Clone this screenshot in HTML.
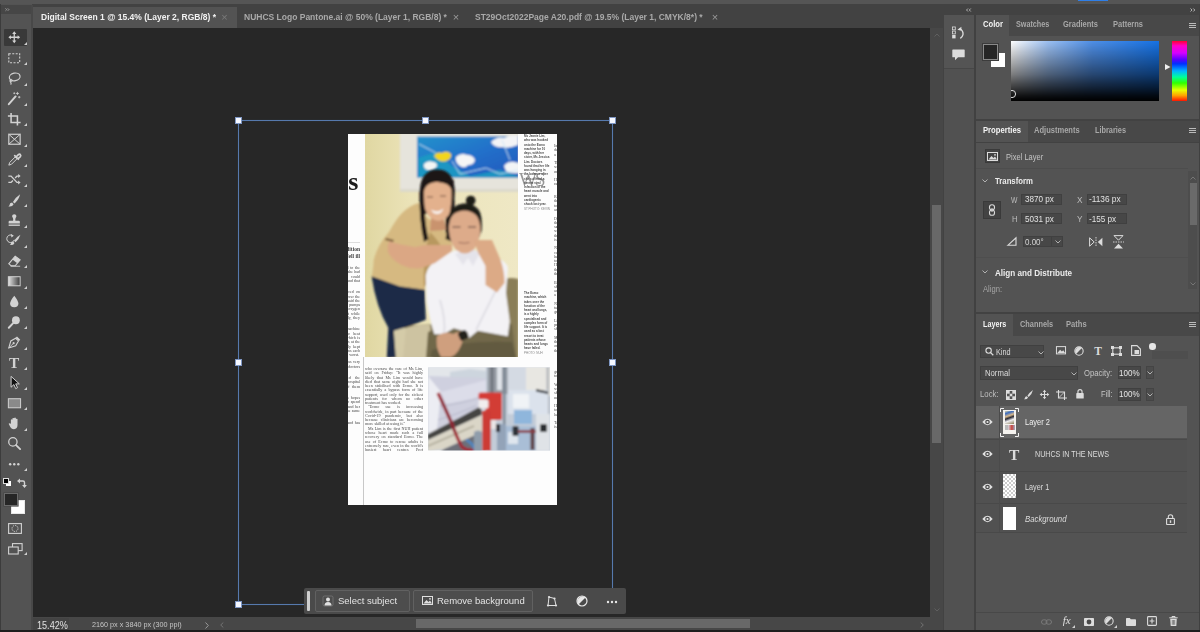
<!DOCTYPE html>
<html lang="en">
<head>
<meta charset="utf-8">
<title>Photoshop</title>
<style>
*{box-sizing:border-box;margin:0;padding:0}
html,body{width:1200px;height:632px;overflow:hidden;background:#535353}
body{font-family:"Liberation Sans",sans-serif;color:#dcdcdc;font-size:8.5px;position:relative}
.a{position:absolute}
.t{position:absolute;white-space:nowrap;line-height:1;filter:blur(.35px)}
.b{font-weight:bold;color:#f2f2f2}
svg{position:absolute;overflow:visible}
/* ---------- frame ---------- */
#topstrip{left:0;top:0;width:1200px;height:4px;background:#555}
#tabbar{left:32px;top:4px;width:912px;height:24px;background:#424242}
#tabactive{left:33px;top:7px;width:204px;height:21px;background:#535353}
#tools{left:0;top:4px;width:32px;height:628px;background:#535353;border-left:1px solid #3c3c3c}
#toolshead{left:1px;top:5px;width:29.500px;height:8.500px;background:#464646}
#toolsedge{left:30.500px;top:5px;width:2.500px;height:625px;background:#484848}
#canvas{left:33px;top:28px;width:897px;height:589px;background:#272727}
#vscroll{left:930px;top:28px;width:13px;height:589px;background:#474747}
#vthumb{left:932px;top:205px;width:9px;height:238px;background:#686868}
#status{left:33px;top:617px;width:910px;height:13px;background:#474747}
#hthumb{left:416px;top:619px;width:334px;height:9px;background:#686868}
#bottomline{left:0;top:630px;width:1200px;height:2px;background:#1e1e1e}
#rightbg{left:943px;top:4px;width:257px;height:626px;background:#424242}
#iconcol{left:944px;top:15px;width:30px;height:615px;background:#515151}
#iconcoltop{left:944px;top:15px;width:30px;height:54px;background:#545454}
.panel{background:#535353}
.phead{background:#484848}
.ptab{background:#535353}
</style>
</head>
<body>
<div class="a" id="topstrip"></div>
<div class="a" id="rightbg"></div>
<div class="a" id="tabbar"></div>
<div class="a" id="tabactive"></div>
<div class="a" id="tools"></div>
<div class="a" id="toolshead"></div>
<div class="a" id="toolsedge"></div>
<div class="a" id="canvas"></div>
<div class="a" id="vscroll"></div>
<div class="a" id="vthumb"></div>
<div class="a" id="status"></div>
<div class="a" id="hthumb"></div>
<div class="a" id="iconcol"></div>
<div class="a" id="iconcoltop"></div>

<!-- TABS TEXT -->
<div class="t b" id="tab1" style="left:41px;top:13px;font-size:8.5px">Digital Screen 1 @ 15.4% (Layer 2, RGB/8) *</div>
<div class="t" id="tab1x" style="left:221.300px;top:11.500px;font-size:11px;color:#7a7a7a">×</div>
<div class="t b" id="tab2" style="left:244px;top:13px;font-size:8.5px;color:#a9a9a9">NUHCS Logo Pantone.ai @ 50% (Layer 1, RGB/8) *</div>
<div class="t" id="tab2x" style="left:452.800px;top:11.500px;font-size:11px;color:#9a9a9a">×</div>
<div class="t b" id="tab3" style="left:475px;top:13px;font-size:8.5px;color:#a9a9a9">ST29Oct2022Page A20.pdf @ 19.5% (Layer 1, CMYK/8*) *</div>
<div class="t" id="tab3x" style="left:711.800px;top:11.500px;font-size:11px;color:#9a9a9a">×</div>

<!-- CANVAS CONTENT -->
<div class="a" id="doc" style="left:348px;top:134px;width:209px;height:371px;background:#fdfdfd"></div>
<svg id="photo" width="1200" height="632" viewBox="0 0 1200 632" style="left:0;top:0">
<defs>
<filter id="bl1" x="-20%" y="-20%" width="140%" height="140%"><feGaussianBlur stdDeviation="0.8"/></filter>
<filter id="bl2" x="-20%" y="-20%" width="140%" height="140%"><feGaussianBlur stdDeviation="1.6"/></filter>
<linearGradient id="wall" x1="0" y1="0" x2="1" y2="0"><stop offset="0" stop-color="#e0d7a2"/><stop offset=".3" stop-color="#ebe3b8"/><stop offset="1" stop-color="#efe8c5"/></linearGradient>
<linearGradient id="paint" x1="0" y1="0" x2="1" y2="1"><stop offset="0" stop-color="#2292cc"/><stop offset=".5" stop-color="#2370ca"/><stop offset="1" stop-color="#2058bc"/></linearGradient>
<clipPath id="cp1"><rect x="365" y="134" width="153" height="223"/></clipPath>
<clipPath id="cp2"><rect x="428" y="367.500" width="122" height="83"/></clipPath>
</defs>
<!-- PHOTO 1 -->
<g clip-path="url(#cp1)">
<rect x="365" y="134" width="153" height="223" fill="url(#wall)"/>
<g filter="url(#bl1)">
<rect x="400" y="133" width="120" height="59" fill="#e6e4dc"/>
<rect x="400" y="189" width="120" height="3" fill="#dcd9cc"/>
<rect x="417" y="136.500" width="102" height="41" fill="url(#paint)"/>
<path d="M418 158 L436 152 L452 166 L470 176 L500 170 L518 176 L518 177.500 L418 177.500Z" fill="#1a9cc2" opacity=".85"/>
<path d="M424 164 q4 -4 9 -2 q4 0 4 4 q-3 5 -9 4 q-5 -1 -4 -6z" fill="#f4f6f4"/>
<path d="M456 157 q5 -5 11 -2 q6 0 8 5 q-1 5 -7 5 q-3 4 -8 1 q-5 -3 -4 -9z" fill="#f6f6f6"/>
<path d="M491 142 q6 -6 13 -4 q8 -4 14 -2 v9 q-10 4 -16 2 q-8 1 -11 -5z" fill="#f3f4f6"/>
<path d="M504 166 q4 -5 10 -4 l5 1 v10 q-9 1 -13 -2z" fill="#f3f4f6"/>
<path d="M434 156 q3 -5 8 -3 q5 -3 9 1 q1 5 -5 7 q-7 2 -12 -5z" fill="#f3d51c"/>
<path d="M419 144 L436 153 M452 161 L460 174 L486 168 L500 174 L518 170 M502 140 L510 160" stroke="#c9e6f4" stroke-width=".9" fill="none"/>
</g>
<g filter="url(#bl1)">
<!-- chair -->
<path d="M504.500 279 q6 -2 14 0 v80 h-127 v-28 q10 -8 20 -6 l60 -2 l32 -8z" fill="#8a7e58"/>
<path d="M392 331 q8 -6 16 -2 l-3 30 h-13z" fill="#d4cba8"/><path d="M406 328 q12 -5 24 -3 l3 34 h-30z" fill="#cdc3a1"/>
<path d="M428 332 q20 -8 40 -6 l44 -2 l4 34 h-90z" fill="#71684a"/>
<path d="M432 350 q30 -10 80 -8 l4 16 h-86z" fill="#625a40"/>
<!-- woman1 hair back -->
<path d="M419.800 192 q.5 -21.500 16.600 -22.500 q17.500 -.5 18.400 21.500 l-.8 15 l-2 36 l-7 -2 l1 -30 l-22 4 l2 26 q2 8 3.500 6 l-3 .5 q-5 -12 -6 -28 q-1 -14 -.7 -26.500z" fill="#1d1815"/>
<!-- beige shirt -->
<path d="M371.600 276.500 q2 -10 2 -16 q4 -16 15 -28 q8 -14 13 -19 q8 -8 17 -10.500 l8 14 l20 16 l6 12 l-20 18 l-8 13 l0.200 14 q-28 -2 -53.400 -13.500z" fill="#d6b981"/>
<path d="M386 238 l8 2 l-1 2 l-8 -2z" fill="#7a5c3a"/>
<path d="M430 232 q10 10 14 20 l-12 22 l-8 14 q-2 -30 6 -56z" fill="#b8985f"/>
<!-- jeans -->
<path d="M371.600 276.300 l28 10 l25.200 3.400 l1 30 q-14 6 -32 11 l2 27 h-9 l1.500 -30 q-12 -20 -16.700 -51.400z" fill="#1a2947"/>
<!-- woman1 face -->
<path d="M431 218 h13 l2 12 l-16 1z" fill="#c9936e"/><path d="M423.700 200 q-.5 -13 4 -16 q5 -2.500 10 -2 q6 .5 10 2.500 q5 3.500 5.300 15.500 q0 12 -7 18 q-7.500 6 -15 0 q-7 -6 -7.300 -18z" fill="#e3b18d"/>
<path d="M431 209.500 q6 4 12.500 -1 q-2 5.500 -6.500 5.500 q-4 0 -6 -4.500z" fill="#f8f1ec"/>
<path d="M427 197 h6 M440 196 h6" stroke="#5a3c30" stroke-width=".8"/>
<!-- hair strand front -->
<path d="M419.500 192 q-.5 28 4.500 50 l4.500 -3 q-4.500 -18 -4.500 -50z" fill="#1d1815"/><path d="M423.500 190 q4 -8 14 -8.500 q10 0 15.500 9 l1 -10 l-16 -9 l-15 8z" fill="#1d1815"/>
<!-- white shirt -->
<path d="M454 250.500 l-19.700 11.500 q-7 5 -8.600 13.400 l1 26.600 q3 18 7.600 32.300 l9.500 0 l10 -6 l14 4 l1 6 l9 -7.500 l30 5.500 l2 -15 l-3.800 -28.500 l2 -25 q-2 -7 -11.300 -9.500 l-19 -7.600z" fill="#f3f2f5"/>
<path d="M440 300 q6 20 4 34 M496 290 q-10 20 -20 40" stroke="#d9d8df" stroke-width="1.500" fill="none"/>
<path d="M455 254 l8 11 l5 -7 l5 8 l7 -13 l-10 -5z" fill="#e4e3ea"/>
<path d="M451.500 190 q3.500 8 3 17 l-4 34 l-5 -2 l3.500 -22 q3 -14 2.500 -27z" fill="#1d1815"/>
<!-- woman2 hair -->
<circle cx="470.700" cy="200.500" r="4.800" fill="#1f1b19"/>
<path d="M448 228 q-1 -12 4 -19 q5 -5.500 14 -5.800 q10 .8 14 9 q2.500 7 1.700 18 l-3 8 l-28 0z" fill="#1f1b19"/>
<!-- woman2 face -->
<path d="M448.800 229 q0 -10 5 -15 q5 -3.500 11 -3.500 q7 .5 11.500 5 q4 5 4 14.500 q-.5 12 -7 20 q-8.500 7 -17 0 q-7 -8 -7.500 -21z" fill="#ddab8a"/>
<path d="M458.500 242.500 q6 1.500 11 0" stroke="#9a6a58" stroke-width="1" fill="none"/>
<path d="M452.500 227 h8 M468 227 h8" stroke="#4a342c" stroke-width=".9"/>
<!-- forearm in front (left) -->
<path d="M389 241.500 l12 3 l14 2.500 l10 -2 h27 v6 l-17 12 l-13.500 5 q-10 2 -20 -3 q-10 -5 -13.500 -13 q-1 -6 1 -10.500z" fill="#dba784"/>
<!-- arm over right shoulder -->
<path d="M474 240 l18 0 l8.700 20.200 q4 12 3.800 22.800 l-7.500 9.500 l-11.500 -7.500 l0 -19 l-7.500 -13.400z" fill="#dcaa86"/>
<!-- hands -->
<path d="M437 336 q8 -6 16 -2 l7 -3 l3 9 q-4 14 -12 17 h-10 q-6 -10 -4 -21z" fill="#cf9f7e"/>
<rect x="459" y="331" width="9" height="9" rx="2" fill="#23201f" transform="rotate(-25 463 336)"/>
</g>
</g>
<!-- PHOTO 2 -->
<g clip-path="url(#cp2)">
<rect x="428" y="367" width="122" height="83.500" fill="#ccd2db"/>
<g filter="url(#bl1)">
<rect x="428" y="366" width="60" height="12" fill="#e3e6ea"/>
<path d="M450 372 l20 -3 l16 2 v8 h-36z" fill="#cdd5de"/>
<path d="M428 376 L486 378 L487 408 L459 418 L428 434Z" fill="#cfd0df"/>
<path d="M428 376 L441 392 L437 430 L428 434Z" fill="#ecedf3"/>
<path d="M441 392 L486 380 L487 396 L446 404Z" fill="#dcdde9"/>
<path d="M440 406 q22 -2 44 -10 M438 420 q20 -6 38 -14" stroke="#b9bacb" stroke-width="1.300" fill="none"/>
<path d="M428 434 L459 418 L481 406 L481.800 415 L428 440Z" fill="#454442"/>
<path d="M428 440 L481.800 415 L481.800 432 L444 449 L428 451Z" fill="#dad6c7"/>
<path d="M428 446 L474 426" stroke="#aeaa98" stroke-width="1.600"/>
<path d="M444 449 L482 432 L482 452 L440 452Z" fill="#6d7078"/>
<!-- right equipment -->
<rect x="486" y="366" width="66" height="86" fill="#c3ccd8"/>
<rect x="487.500" y="366" width="20" height="28" fill="#969ca4"/>
<rect x="490.500" y="366" width="3" height="40" fill="#6f757d"/>
<rect x="497" y="366" width="5" height="24" fill="#dfe3e8"/>
<rect x="503" y="366" width="2.500" height="60" fill="#7c8794"/>
<rect x="508" y="366" width="18" height="24" fill="#d4dae3"/>
<rect x="526" y="366" width="26" height="30" fill="#e8e7e2"/>
<rect x="546.500" y="366" width="2.500" height="84" fill="#b4b7bb"/>
<rect x="508" y="390" width="40" height="24" fill="#dbe2ec"/>
<rect x="513" y="394" width="16" height="14" fill="#f0f3f6"/>
<path d="M536 389 l12 2.500 v2.500 l-12 -2.500z" fill="#33353a"/>
<rect x="514" y="410" width="18" height="14" fill="#8fb6dc"/>
<rect x="506" y="426" width="30" height="25" fill="#a9bed6"/>
<rect x="508" y="432" width="10" height="12" fill="#dfe6ee"/>
<rect x="512.500" y="426" width="6" height="10" rx="1.500" fill="#2e3238"/>
<rect x="530.500" y="428" width="4" height="22" fill="#5d3f44"/>
<rect x="536" y="414" width="14" height="37" fill="#dfe3e7"/>
<rect x="540" y="424" width="7" height="8" rx="1.500" fill="#2a2d31"/>
<path d="M518 431.500 h18" stroke="#8a3a42" stroke-width="2.600"/>
<rect x="497" y="424" width="9" height="27" fill="#93a3b8"/>
<!-- red machine -->
<rect x="478.500" y="392.500" width="23.500" height="7" rx="2" fill="#d53a34"/>
<rect x="485.500" y="398" width="16.500" height="22" rx="2" fill="#d23c36"/>
<rect x="478.500" y="399.500" width="10" height="9" rx="2" fill="#f1eeef"/>
<rect x="482.300" y="411" width="8.500" height="40" fill="#cc3b35"/>
<rect x="491" y="420" width="5" height="9" fill="#e9e5e6"/>
<rect x="496" y="424" width="4" height="8" fill="#2a2c30"/>
<!-- tubes -->
<path d="M438 393 Q446 410 452 424 Q457 438 462 447 Q467 451 475 450" stroke="#a32836" stroke-width="3.300" fill="none"/>
<path d="M441 399 Q449 416 455 432" stroke="#7a2030" stroke-width="1.400" fill="none"/>
<path d="M466 440 q6 2 9 10" stroke="#4d86c2" stroke-width="2.600" fill="none"/>
<path d="M474 432 q4 -3 8 0 v20 h-8z" fill="#8f9dab"/>
</g>
</g>
</svg>
<style>
.np{position:absolute;overflow:hidden;font-family:"Liberation Serif",serif;font-size:3.6px;line-height:4.27px;color:#2a2a2a;text-align:justify;filter:blur(.3px)}
.np p{text-indent:3px}
.cap{font-family:"Liberation Sans",sans-serif;font-weight:bold;font-size:3px;color:#484848;text-align:left}
</style>
<div class="t" id="bigS" style="left:348.300px;top:169px;font-family:'Liberation Serif',serif;font-weight:bold;font-size:26px;color:#1c1c1c;filter:blur(.4px)">s</div>
<div class="a" style="left:348px;top:242px;width:12px;height:1px;background:#ddd"></div>
<div class="np" style="left:348px;top:246px;width:12px;height:14px;font-weight:bold;font-size:5.5px;line-height:6.5px;color:#444"><div style="width:40px;margin-left:-28px;text-align:right">heart condition<br>after she fell ill</div></div>
<div class="np" id="lcol" style="left:348px;top:266px;width:12px;height:160px;font-size:4px;color:#444"><div style="width:60px;margin-left:-48px;text-align:justify">
When Ms Lim was admitted to the National University Hospital she had been unwell for days and could barely breathe and doctors found that her heart was failing badly.
<p style="margin-top:3px">Within hours she was placed on Ecmo, a machine that takes over the work of the heart and lungs, said the cardiac team on Friday. It pumps blood out of the body, adds oxygen and returns it to the patient while organs rest and recover slowly, they said.</p>
<p style="margin-top:3px">She spent ten days on the machine before her heart began to beat strongly on its own again, which is rare, the doctors told reporters at the heart centre here. Her family kept vigil at the bedside, taking turns each night, and said they feared the worst.</p>
<p style="margin-top:3px">Her sister said the family was very grateful to the nurses and doctors who cared.</p>
<p style="margin-top:3px">About 100 patients need the treatment here each year, the hospital said, and more than half of them survive.</p>
<p style="margin-top:3px">The mother of two said she hopes to return to work soon and to spend more time with her children and her parents, who live nearby in the same estate.</p>
<p style="margin-top:3px">She now walks every day and has been told her heart is normal.</p>
</div></div>
<div class="a" style="left:363px;top:357px;width:1px;height:148px;background:#c8c8c8"></div>
<div class="np" id="mcol" style="left:365px;top:367px;width:58px;height:84px;color:#484848;font-size:4.1px">
who oversaw the care of Ms Lim, said on Friday: "It was highly likely that Ms Lim would have died that same night had she not been stabilised with Ecmo. It is essentially a bypass form of life support, used only for the sickest patients for whom no other treatment has worked.
<p>"Ecmo use is increasing worldwide, in part because of the Covid-19 pandemic, but also because clinicians are becoming more skilled at using it."</p>
<p>Ms Lim is the first NUH patient whose heart made such a full recovery on standard Ecmo. The use of Ecmo to rescue adults is extremely rare, even in the world's busiest heart centres, Prof MacLaren said.</p>
</div>
<div class="np cap" id="cap1" style="left:524px;top:134px;width:26px;height:77px">Ms Jeanie Lim, who was hooked onto the Ecmo machine for 10 days, with her sister, Ms Jessica Lim. Doctors found that her life was hanging in the balance after she suffered a severe viral infection of the heart muscle and went into cardiogenic shock last year. <span style="color:#888;font-weight:normal">ST PHOTO: KEVIN LIM</span></div>
<div class="t" id="vvs" style="left:519px;top:170px;font-family:'Liberation Serif',serif;font-size:19px;letter-spacing:-2px;color:#555;opacity:.6;filter:blur(.4px)">WS</div>
<div class="np cap" id="cap2" style="left:524px;top:291px;width:26px;height:66px">The Ecmo machine, which takes over the function of the heart and lungs, is a highly specialised and complex form of life support. It is used as a last resort to treat patients whose hearts and lungs have failed. <span style="color:#888;font-weight:normal">PHOTO: NUH</span></div>
<div class="np" id="rcol" style="left:554.300px;top:144px;width:2.700px;height:220px;color:#333"><div style="width:60px">
In a first for the hospital, the team<br>decided to try<br>a newer drug.<br><br>The patient<br>was then<br>moved.<br><br>Her heart<br>rate rose.<br><br><br>Recovery of<br>the muscle<br>took weeks<br>and months.<br><br>Doctors at<br>the centre<br>said they<br>were glad<br>that she<br>is well.<br><br>Nurses who<br>cared for<br>her came<br>to visit.<br>Her family<br>thanked<br>them all.<br><br>Back home<br>she rests<br>and walks<br>a little.<br><br>Nothing is<br>taken for<br>granted.<br><br>Life is<br>precious<br>she said.<br><br>More on<br>the story<br>online at<br>the site.
</div></div>
<div class="np" id="rcol2" style="left:554.300px;top:370px;width:2.700px;height:60px;color:#333"><div style="width:60px">
grateful<br>to them.<br><br>When she<br>woke up<br>she did<br>not know.<br><br>Her sister<br>told her<br>later on.<br><br>Today she<br>is back.
</div></div>
<style>
.tl{position:absolute;background:#5679ad;box-shadow:0 0 1px rgba(70,100,150,.5)}
.hd{position:absolute;width:7.500px;height:7.500px;background:#f6f8ff;border:1px solid #7f97c4;margin:-.25px 0 0 -.25px}
</style>
<div class="tl" style="left:238px;top:120px;width:374px;height:1px"></div>
<div class="tl" style="left:238px;top:604px;width:374px;height:1px"></div>
<div class="tl" style="left:238px;top:120px;width:1px;height:485px"></div>
<div class="tl" style="left:612px;top:120px;width:1px;height:485px"></div>
<div class="hd" style="left:235px;top:117px"></div>
<div class="hd" style="left:422px;top:117px"></div>
<div class="hd" style="left:609px;top:117px"></div>
<div class="hd" style="left:235px;top:359px"></div>
<div class="hd" style="left:609px;top:359px"></div>
<div class="hd" style="left:235px;top:601px"></div>
<!-- contextual task bar -->
<div class="a" id="ctx" style="left:304px;top:588px;width:322px;height:26px;background:#4a4a4a;border-radius:2px"></div>
<div class="a" style="left:307px;top:591px;width:3px;height:20px;background:#cfcfcf;border-radius:1px"></div>
<div class="a" style="left:315px;top:590px;width:95px;height:22px;border:1px solid #616161;border-radius:2px;background:#4d4d4d"></div>
<div class="a" style="left:413px;top:590px;width:120px;height:22px;border:1px solid #616161;border-radius:2px;background:#4d4d4d"></div>
<svg width="10" height="10" viewBox="0 0 10 10" style="left:323px;top:596px"><rect x="0" y="0" width="10" height="10" rx="1.500" fill="none" stroke="#777" stroke-width=".8"/><circle cx="5" cy="3.600" r="2" fill="#e0e0e0"/><path d="M1.500 9.500 q0 -3.500 3.500 -3.500 q3.500 0 3.500 3.500z" fill="#e0e0e0"/></svg>
<div class="t" id="selsub" style="left:338px;top:596px;font-size:9.5px;color:#e4e4e4">Select subject</div>
<svg width="11" height="9" viewBox="0 0 11 9" style="left:422px;top:596px"><rect x=".5" y=".5" width="10" height="8" fill="none" stroke="#e0e0e0" stroke-width="1"/><path d="M1.500 7.500 l3 -3.500 l2 2 l1.500 -1.500 l2 3z" fill="#e0e0e0"/><circle cx="8" cy="2.800" r=".9" fill="#e0e0e0"/></svg>
<div class="t" id="rembg" style="left:437px;top:596px;font-size:9.5px;color:#e4e4e4">Remove background</div>
<svg width="12" height="12" viewBox="0 0 12 12" style="left:546px;top:595px"><path d="M2 10.500 L3 2 L8.500 3.500 L10 10.500 Z" fill="none" stroke="#e0e0e0" stroke-width="1"/><circle cx="3" cy="2" r="1.100" fill="#e0e0e0"/><circle cx="8.500" cy="3.500" r="1.100" fill="#e0e0e0"/><circle cx="10" cy="10.500" r="1.100" fill="#e0e0e0"/><circle cx="2" cy="10.500" r="1.100" fill="#e0e0e0"/></svg>
<svg width="12" height="12" viewBox="0 0 12 12" style="left:576px;top:595px"><circle cx="6" cy="6" r="5" fill="none" stroke="#e8e8e8" stroke-width="1.200"/><path d="M2.500 9.500 A5 5 0 0 1 9.500 2.500 Z" fill="#e8e8e8"/></svg>
<svg width="12" height="4" viewBox="0 0 12 4" style="left:606px;top:600px"><circle cx="2" cy="2" r="1.200" fill="#e8e8e8"/><circle cx="6" cy="2" r="1.200" fill="#e8e8e8"/><circle cx="10" cy="2" r="1.200" fill="#e8e8e8"/></svg>

<!--CANVAS_END-->

<!-- TOOLBAR -->
<!--TOOLS_BEGIN-->
<div class="a" style="left:4px;top:29.300px;width:22.700px;height:17px;background:#393939;border-radius:1px"></div>
<svg width="5" height="3.200" viewBox="0 0 6 4" style="left:5.300px;top:8px"><path d="M.5 .5 L2 2 L.5 3.500 M3.300 .5 L4.800 2 L3.300 3.500" fill="none" stroke="#bdbdbd" stroke-width=".9"/></svg>
<svg width="14.500" height="14.500" viewBox="0 0 16 16" style="left:6.800px;top:30.3px;filter:blur(.35px)"><path d="M8 1.500 L10.300 4.300 H8.700 V7.300 H11.700 V5.700 L14.500 8 L11.700 10.300 V8.700 H8.700 V11.700 H10.300 L8 14.500 L5.700 11.700 H7.300 V8.700 H4.300 V10.300 L1.500 8 L4.300 5.700 V7.300 H7.300 V4.300 H5.700Z" fill="#d2d2d2"/></svg>
<svg width="3" height="3" viewBox="0 0 3 3" style="left:23.500px;top:42.0px"><path d="M3 0 V3 H0Z" fill="#cfcfcf"/></svg>
<svg width="14.500" height="14.500" viewBox="0 0 16 16" style="left:6.800px;top:50.6px;filter:blur(.35px)"><rect x="2" y="3" width="12" height="10" fill="none" stroke="#d2d2d2" stroke-width="1.200" stroke-dasharray="2.200 1.600"/></svg>
<svg width="3" height="3" viewBox="0 0 3 3" style="left:23.500px;top:62.3px"><path d="M3 0 V3 H0Z" fill="#cfcfcf"/></svg>
<svg width="14.500" height="14.500" viewBox="0 0 16 16" style="left:6.800px;top:70.9px;filter:blur(.35px)"><ellipse cx="8.500" cy="6.500" rx="6" ry="4.200" fill="none" stroke="#d2d2d2" stroke-width="1.300" transform="rotate(-12 8.500 6.500)"/><path d="M4.500 9.800 q-1.800 1.200 -.6 2.600 q1.200 1.200 .2 2.600" fill="none" stroke="#d2d2d2" stroke-width="1.200"/><circle cx="4.600" cy="10.500" r="1.300" fill="none" stroke="#d2d2d2" stroke-width="1"/></svg>
<svg width="3" height="3" viewBox="0 0 3 3" style="left:23.500px;top:82.6px"><path d="M3 0 V3 H0Z" fill="#cfcfcf"/></svg>
<svg width="14.500" height="14.500" viewBox="0 0 16 16" style="left:6.800px;top:91.2px;filter:blur(.35px)"><path d="M2 14.500 L9.500 6" stroke="#d2d2d2" stroke-width="2.200" stroke-linecap="round"/><path d="M11.500 1 v3.400 M9.800 2.700 h3.400 M13.500 5.500 v2.600 M12.200 6.800 h2.600 M8 1.500 v2 M7 2.500 h2" stroke="#d2d2d2" stroke-width=".9"/></svg>
<svg width="3" height="3" viewBox="0 0 3 3" style="left:23.500px;top:102.9px"><path d="M3 0 V3 H0Z" fill="#cfcfcf"/></svg>
<svg width="14.500" height="14.500" viewBox="0 0 16 16" style="left:6.800px;top:111.5px;filter:blur(.35px)"><path d="M4.500 1 V11.500 H15" fill="none" stroke="#d2d2d2" stroke-width="1.700"/><path d="M1 4.500 H11.500 V15" fill="none" stroke="#d2d2d2" stroke-width="1.700"/></svg>
<svg width="3" height="3" viewBox="0 0 3 3" style="left:23.500px;top:123.2px"><path d="M3 0 V3 H0Z" fill="#cfcfcf"/></svg>
<svg width="14.500" height="14.500" viewBox="0 0 16 16" style="left:6.800px;top:131.8px;filter:blur(.35px)"><rect x="2" y="2.500" width="12.500" height="11" fill="none" stroke="#d2d2d2" stroke-width="1.300"/><path d="M2 2.500 L14.500 13.500 M14.500 2.500 L2 13.500" stroke="#d2d2d2" stroke-width="1.100"/></svg>
<svg width="3" height="3" viewBox="0 0 3 3" style="left:23.500px;top:143.5px"><path d="M3 0 V3 H0Z" fill="#cfcfcf"/></svg>
<svg width="14.500" height="14.500" viewBox="0 0 16 16" style="left:6.800px;top:152.1px;filter:blur(.35px)"><path d="M2 14.500 L3 11.500 L9 5.500 L11 7.500 L5 13.500 Z" fill="none" stroke="#d2d2d2" stroke-width="1.100"/><path d="M8.500 4 L12.500 8 M10 5.500 L12.500 3 q1.500 -1.200 2.300 0 q.9 1 -.3 2.300 L12 7.500" stroke="#d2d2d2" stroke-width="1.900" fill="none" stroke-linecap="round"/></svg>
<svg width="3" height="3" viewBox="0 0 3 3" style="left:23.500px;top:163.8px"><path d="M3 0 V3 H0Z" fill="#cfcfcf"/></svg>
<svg width="14.500" height="14.500" viewBox="0 0 16 16" style="left:6.800px;top:172.4px;filter:blur(.35px)"><path d="M1.500 4.500 H4.500 L11 11.500 H13 M1.500 11.500 H4.500 L6.500 9.300 M9 6.700 L11 4.500 H13" fill="none" stroke="#d2d2d2" stroke-width="1.500"/><path d="M12.300 2.300 L15 4.500 L12.300 6.700Z M12.300 9.300 L15 11.500 L12.300 13.700Z" fill="#d2d2d2"/></svg>
<svg width="3" height="3" viewBox="0 0 3 3" style="left:23.500px;top:184.1px"><path d="M3 0 V3 H0Z" fill="#cfcfcf"/></svg>
<svg width="14.500" height="14.500" viewBox="0 0 16 16" style="left:6.800px;top:192.7px;filter:blur(.35px)"><path d="M14.500 1.500 q-5 3.500 -8 8.300 l1.800 1.800 q4.800 -4 6.200 -10.100z" fill="#d2d2d2"/><path d="M5.600 10.600 q-2.800 .2 -2.800 2.600 q-.3 1.200 -1.500 1.600 q4.500 1 6 -2.500z" fill="#d2d2d2"/></svg>
<svg width="3" height="3" viewBox="0 0 3 3" style="left:23.500px;top:204.4px"><path d="M3 0 V3 H0Z" fill="#cfcfcf"/></svg>
<svg width="14.500" height="14.500" viewBox="0 0 16 16" style="left:6.800px;top:213.0px;filter:blur(.35px)"><path d="M6 2.200 q2 -1.600 4 0 q1 1.600 -.5 3.300 q-.6 1 -.2 3 h3.700 q1.200 0 1.200 1.200 V11.500 H1.800 V9.700 q0 -1.200 1.200 -1.200 H6.700 q.4 -2 -.2 -3 q-1.500 -1.700 -.5 -3.300z" fill="#d2d2d2"/><rect x="1.800" y="12.700" width="12.400" height="1.500" fill="#d2d2d2"/></svg>
<svg width="3" height="3" viewBox="0 0 3 3" style="left:23.500px;top:224.7px"><path d="M3 0 V3 H0Z" fill="#cfcfcf"/></svg>
<svg width="14.500" height="14.500" viewBox="0 0 16 16" style="left:6.800px;top:233.3px;filter:blur(.35px)"><path d="M14.800 2 q-4.500 2.500 -7 6.500 l1.700 1.700 q3.800 -3.200 5.300 -8.200z" fill="#d2d2d2"/><path d="M6.800 9.400 q-2.400 .1 -2.500 2.200 q-.3 1.200 -1.400 1.500 q4 .9 5.400 -2.200z" fill="#d2d2d2"/><path d="M6.500 3 A4.200 4.200 0 1 0 8 7.500" fill="none" stroke="#d2d2d2" stroke-width="1.100"/><path d="M4.500 1 L7.500 3 L4.800 5Z" fill="#d2d2d2"/></svg>
<svg width="3" height="3" viewBox="0 0 3 3" style="left:23.500px;top:245.0px"><path d="M3 0 V3 H0Z" fill="#cfcfcf"/></svg>
<svg width="14.500" height="14.500" viewBox="0 0 16 16" style="left:6.800px;top:253.6px;filter:blur(.35px)"><path d="M9 2.500 L14.500 6.500 L9 13 H4.500 L2 10.800 Z" fill="none" stroke="#d2d2d2" stroke-width="1.200"/><path d="M9 2.500 L14.500 6.500 L11.300 10.200 L6 6z" fill="#d2d2d2"/><path d="M4 13.500 H14.500" stroke="#d2d2d2" stroke-width="1"/></svg>
<svg width="3" height="3" viewBox="0 0 3 3" style="left:23.500px;top:265.3px"><path d="M3 0 V3 H0Z" fill="#cfcfcf"/></svg>
<svg width="14.500" height="14.500" viewBox="0 0 16 16" style="left:6.800px;top:273.9px;filter:blur(.35px)"><defs><linearGradient id="gtool" x1="0" x2="1"><stop offset="0" stop-color="#e4e4e4"/><stop offset="1" stop-color="#3a3a3a"/></linearGradient></defs><rect x="1.500" y="3" width="13" height="10" fill="url(#gtool)" stroke="#d2d2d2" stroke-width="1.100"/></svg>
<svg width="3" height="3" viewBox="0 0 3 3" style="left:23.500px;top:285.6px"><path d="M3 0 V3 H0Z" fill="#cfcfcf"/></svg>
<svg width="14.500" height="14.500" viewBox="0 0 16 16" style="left:6.800px;top:294.2px;filter:blur(.35px)"><path d="M8 1.800 q4.600 5.600 4.600 8.800 q0 4 -4.600 4 q-4.600 0 -4.600 -4 q0 -3.200 4.600 -8.800z" fill="#d2d2d2"/></svg>
<svg width="3" height="3" viewBox="0 0 3 3" style="left:23.500px;top:305.9px"><path d="M3 0 V3 H0Z" fill="#cfcfcf"/></svg>
<svg width="14.500" height="14.500" viewBox="0 0 16 16" style="left:6.800px;top:314.5px;filter:blur(.35px)"><circle cx="9.800" cy="5.800" r="4.300" fill="#d2d2d2"/><path d="M6.800 9 L2 14" stroke="#d2d2d2" stroke-width="2.200" stroke-linecap="round"/></svg>
<svg width="3" height="3" viewBox="0 0 3 3" style="left:23.500px;top:326.2px"><path d="M3 0 V3 H0Z" fill="#cfcfcf"/></svg>
<svg width="14.500" height="14.500" viewBox="0 0 16 16" style="left:6.800px;top:334.8px;filter:blur(.35px)"><path d="M2 14.300 L4.200 6.600 L9.600 3.600 L12.600 6.600 L9.600 12 Z" fill="none" stroke="#d2d2d2" stroke-width="1.200"/><path d="M2 14.300 L6.800 9.500" stroke="#d2d2d2" stroke-width="1"/><circle cx="7.300" cy="9" r="1.200" fill="#d2d2d2"/><path d="M10.300 2.300 L13.900 5.900" stroke="#d2d2d2" stroke-width="2"/></svg>
<svg width="3" height="3" viewBox="0 0 3 3" style="left:23.500px;top:346.5px"><path d="M3 0 V3 H0Z" fill="#cfcfcf"/></svg>
<svg width="14.500" height="14.500" viewBox="0 0 16 16" style="left:6.800px;top:355.1px;filter:blur(.35px)"><text x="8" y="14" text-anchor="middle" font-family="Liberation Serif, serif" font-weight="bold" font-size="17" fill="#d2d2d2">T</text></svg>
<svg width="3" height="3" viewBox="0 0 3 3" style="left:23.500px;top:366.8px"><path d="M3 0 V3 H0Z" fill="#cfcfcf"/></svg>
<svg width="14.500" height="14.500" viewBox="0 0 16 16" style="left:6.800px;top:375.4px;filter:blur(.35px)"><path d="M4.500 1.500 V13.500 L7.600 10.600 L9.600 15 L11.600 14 L9.600 9.800 H13.600 Z" fill="#111" stroke="#d2d2d2" stroke-width="1.100" stroke-linejoin="round"/></svg>
<svg width="3" height="3" viewBox="0 0 3 3" style="left:23.500px;top:387.1px"><path d="M3 0 V3 H0Z" fill="#cfcfcf"/></svg>
<svg width="14.500" height="14.500" viewBox="0 0 16 16" style="left:6.800px;top:395.7px;filter:blur(.35px)"><rect x="1.500" y="3" width="13.500" height="10" fill="#8a8a8a" stroke="#d2d2d2" stroke-width="1.100"/></svg>
<svg width="3" height="3" viewBox="0 0 3 3" style="left:23.500px;top:407.4px"><path d="M3 0 V3 H0Z" fill="#cfcfcf"/></svg>
<svg width="14.500" height="14.500" viewBox="0 0 16 16" style="left:6.800px;top:416.0px;filter:blur(.35px)"><path d="M4.300 8.800 V4.200 q.9 -1 1.700 0 V2.600 q1 -1 1.900 0 V2.200 q1 -1 1.900 0 V3.400 q1 -.9 1.800 0 V10 q0 4.500 -3.900 4.500 q-2.700 0 -3.900 -2.100 L1.800 8.600 q.7 -1.300 2 -.3z" fill="#d2d2d2"/></svg>
<svg width="3" height="3" viewBox="0 0 3 3" style="left:23.500px;top:427.7px"><path d="M3 0 V3 H0Z" fill="#cfcfcf"/></svg>
<svg width="14.500" height="14.500" viewBox="0 0 16 16" style="left:6.800px;top:436.3px;filter:blur(.35px)"><circle cx="6.500" cy="6.500" r="4.600" fill="none" stroke="#d2d2d2" stroke-width="1.400"/><path d="M10 10 L14.500 14.500" stroke="#d2d2d2" stroke-width="2" stroke-linecap="round"/></svg>
<svg width="14.500" height="14.500" viewBox="0 0 16 16" style="left:6.800px;top:456.6px;filter:blur(.35px)"><circle cx="3.500" cy="8" r="1.350" fill="#d2d2d2"/><circle cx="8" cy="8" r="1.350" fill="#d2d2d2"/><circle cx="12.500" cy="8" r="1.350" fill="#d2d2d2"/></svg>
<svg width="3" height="3" viewBox="0 0 3 3" style="left:23.500px;top:468.3px"><path d="M3 0 V3 H0Z" fill="#cfcfcf"/></svg>
<div class="a" style="left:6px;top:481px;width:5px;height:5px;background:#fff"></div>
<div class="a" style="left:3px;top:478px;width:6px;height:6px;background:#000;border:1px solid #ddd"></div>
<svg width="10" height="10" viewBox="0 0 10 10" style="left:17px;top:477.500px"><path d="M2.500 3 H6 q1.500 0 1.500 1.500 V8" fill="none" stroke="#d2d2d2" stroke-width="1.400"/><path d="M0 3 L3 .6 V5.400Z M7.500 10 L5.100 7 H9.900Z" fill="#d2d2d2"/></svg>
<div class="a" style="left:11px;top:499.500px;width:14px;height:14px;background:#fff;border:1px solid #e8e8e8"></div>
<div class="a" style="left:4px;top:492.500px;width:14px;height:13.500px;background:#262626;border:1px solid #6a6a6a;box-shadow:0 0 0 .6px #444"></div>
<svg width="14" height="11" viewBox="0 0 14 11" style="left:7.500px;top:523px"><rect x=".6" y=".6" width="12.800" height="9.800" fill="none" stroke="#d2d2d2" stroke-width="1.100"/><circle cx="7" cy="5.500" r="3" fill="none" stroke="#d2d2d2" stroke-width="1" stroke-dasharray="1.300 1"/></svg>
<svg width="15" height="12" viewBox="0 0 15 12" style="left:7.500px;top:543px"><rect x="4.500" y=".6" width="9.600" height="7" fill="none" stroke="#d2d2d2" stroke-width="1.100"/><rect x=".6" y="4" width="9.600" height="7" fill="#535353" stroke="#d2d2d2" stroke-width="1.100"/></svg>
<svg width="3" height="3" viewBox="0 0 3 3" style="left:23.500px;top:552px"><path d="M3 0 V3 H0Z" fill="#cfcfcf"/></svg>
<!--TOOLS_END-->

<!-- RIGHT PANELS -->
<!--RIGHT_BEGIN-->
<div class="a" style="left:974px;top:15px;width:2px;height:615px;background:#414141"></div>
<svg width="6" height="4" viewBox="0 0 6 4" style="left:965.500px;top:7.500px"><path d="M2 .5 L.5 2 L2 3.500 M4.800 .5 L3.300 2 L4.800 3.500" fill="none" stroke="#bdbdbd" stroke-width=".9"/></svg>
<svg width="6" height="4" viewBox="0 0 6 4" style="left:1189.500px;top:7.500px"><path d="M.5 .5 L2 2 L.5 3.500 M3.300 .5 L4.800 2 L3.300 3.500" fill="none" stroke="#bdbdbd" stroke-width=".9"/></svg>
<svg width="12.500" height="13" viewBox="0 0 14 14" style="left:952.300px;top:26px;filter:blur(.35px)"><rect x=".5" y=".8" width="3.200" height="3.200" fill="none" stroke="#dcdcdc" stroke-width=".9"/><rect x=".5" y="5.400" width="3.200" height="3.200" fill="none" stroke="#dcdcdc" stroke-width=".9"/><rect x=".2" y="9.800" width="3.800" height="3.800" fill="#dcdcdc"/><path d="M8.500 2.500 q4.500 2.500 3.800 7 q-.5 2.500 -3 4" fill="none" stroke="#dcdcdc" stroke-width="1.500"/><path d="M6 4 L10.500 .5 L10.500 5z" fill="#dcdcdc"/></svg>
<svg width="13" height="12" viewBox="0 0 14 13" style="left:952.300px;top:49px;filter:blur(.35px)"><path d="M1 .5 H13 q.7 0 .7 .7 V8.300 q0 .7 -.7 .7 H6.500 L3.200 12.300 V9 H1 q-.7 0 -.7 -.7 V1.200 q0 -.7 .7 -.7z" fill="#dcdcdc"/></svg>
<div class="a phead" style="left:976px;top:15px;width:224px;height:21px"></div>
<div class="a ptab" style="left:976px;top:15px;width:32.500px;height:21px"></div>
<div class="a panel" style="left:976px;top:36px;width:224px;height:83px"></div>
<div class="a" style="left:944px;top:68px;width:30px;height:1px;background:#474747"></div>
<svg width="7" height="5" viewBox="0 0 7 5" style="left:1189px;top:22.500px"><path d="M0 .5 H7 M0 2.500 H7 M0 4.500 H7" stroke="#c8c8c8" stroke-width=".9"/></svg>
<div class="a" style="left:991px;top:52.700px;width:14px;height:14px;background:#fff"></div>
<div class="a" style="left:982.700px;top:44.300px;width:15.600px;height:15.700px;background:#262626;border:1.500px solid #8a8a8a;outline:1px solid #3c3c3c"></div>
<div class="a" style="left:1010.700px;top:41px;width:148.600px;height:59.700px;overflow:hidden;background:linear-gradient(to bottom,rgba(0,0,0,0) 0%,rgba(0,0,0,.5) 55%,rgba(0,0,0,.93) 92%,#000 100%),linear-gradient(to right,#fff 0%,#9cc0f2 25%,#4f8fe6 55%,#1672e4 100%)"><svg width="10" height="10" viewBox="0 0 10 10" style="left:-4px;top:48px"><circle cx="5" cy="5" r="3.600" fill="none" stroke="#ddd" stroke-width="1"/></svg></div>
<svg width="6" height="6" viewBox="0 0 6 6" style="left:1165px;top:63.700px"><path d="M0 0 L5.500 3 L0 6Z" fill="#eee"/></svg>
<div class="a" style="left:1172.300px;top:41px;width:15px;height:59.700px;background:linear-gradient(to bottom,#ff0030 0%,#ff00c8 8%,#d400ff 20%,#5a00ff 31%,#0030ff 38%,#00b4ff 50%,#00ff9c 60%,#30ff00 70%,#e8ff00 82%,#ffa000 91%,#ff1400 100%)"></div>
<div class="a phead" style="left:976px;top:120.700px;width:224px;height:21.800px"></div>
<div class="a ptab" style="left:976px;top:120.700px;width:52px;height:21.800px"></div>
<div class="a panel" style="left:976px;top:142.500px;width:224px;height:169px"></div>
<svg width="7" height="5" viewBox="0 0 7 5" style="left:1189px;top:128px"><path d="M0 .5 H7 M0 2.500 H7 M0 4.500 H7" stroke="#c8c8c8" stroke-width=".9"/></svg>
<div class="a" style="left:984.700px;top:149.200px;width:15.600px;height:14px;background:#444;border:1px solid #3a3a3a"></div>
<svg width="11" height="9" viewBox="0 0 11 9" style="left:987px;top:151.700px"><rect x=".5" y=".5" width="10" height="8" fill="none" stroke="#dcdcdc" stroke-width="1"/><path d="M1.500 7.500 l3 -3.500 l2 2 l1.500 -1.500 l2 3z" fill="#dcdcdc"/><circle cx="8" cy="2.800" r=".9" fill="#dcdcdc"/></svg>
<div class="a" style="left:976px;top:168px;width:212px;height:1px;background:#4d4d4d"></div>
<svg width="6" height="4" viewBox="0 0 6 4" style="left:982px;top:178.5px"><path d="M.5 .5 L3 3 L5.500 .5" fill="none" stroke="#bdbdbd" stroke-width=".9"/></svg>
<svg width="6" height="4" viewBox="0 0 6 4" style="left:982px;top:270.0px"><path d="M.5 .5 L3 3 L5.500 .5" fill="none" stroke="#bdbdbd" stroke-width=".9"/></svg>
<div class="a" style="left:983px;top:200.700px;width:17.700px;height:18px;background:#434343;border:1px solid #3a3a3a"></div>
<svg width="8" height="12" viewBox="0 0 8 12" style="left:988px;top:203.700px"><rect x="1.500" y=".7" width="5" height="5.300" rx="2.400" fill="none" stroke="#dcdcdc" stroke-width="1.100"/><rect x="1.500" y="6" width="5" height="5.300" rx="2.400" fill="none" stroke="#dcdcdc" stroke-width="1.100"/><path d="M4 4 V8" stroke="#dcdcdc" stroke-width="1.100"/></svg>
<div class="a" style="left:1021.3px;top:194.0px;width:40.8px;height:10.7px;background:#474747;border:1px solid #404040"></div>
<div class="a" style="left:1087.0px;top:194.0px;width:39.9px;height:10.7px;background:#474747;border:1px solid #404040"></div>
<div class="a" style="left:1021.3px;top:213.3px;width:40.8px;height:10.7px;background:#474747;border:1px solid #404040"></div>
<div class="a" style="left:1087.0px;top:213.3px;width:39.9px;height:10.7px;background:#474747;border:1px solid #404040"></div>
<div class="a" style="left:1022.9px;top:236.2px;width:40.0px;height:10.7px;background:#474747;border:1px solid #404040"></div>
<div class="a" style="left:1051px;top:237.200px;width:1px;height:8.700px;background:#3f3f3f"></div>
<svg width="6" height="4" viewBox="0 0 6 4" style="left:1054.500px;top:240px"><path d="M.5 .5 L3 3 L5.500 .5" fill="none" stroke="#bdbdbd" stroke-width=".9"/></svg>
<svg width="11" height="9" viewBox="0 0 11 9" style="left:1007px;top:237px"><path d="M.8 8.300 L9 .8 V8.300 Z" fill="none" stroke="#dcdcdc" stroke-width="1.100"/></svg>
<svg width="14" height="10" viewBox="0 0 14 10" style="left:1089px;top:236.700px"><path d="M.6 .8 L5.200 5 L.6 9.200Z" fill="none" stroke="#dcdcdc" stroke-width="1"/><path d="M13.400 .8 L8.800 5 L13.400 9.200Z" fill="#dcdcdc"/><path d="M7 0 V10" stroke="#dcdcdc" stroke-width=".9" stroke-dasharray="1.500 1"/></svg>
<svg width="11" height="14" viewBox="0 0 11 14" style="left:1112.500px;top:234.500px"><path d="M1 .6 L5.500 5.200 L10 .6Z" fill="none" stroke="#dcdcdc" stroke-width="1"/><path d="M1 13.400 L5.500 8.800 L10 13.400Z" fill="#dcdcdc"/><path d="M0 7 H11" stroke="#dcdcdc" stroke-width=".9" stroke-dasharray="1.500 1"/></svg>
<div class="a" style="left:976px;top:257px;width:212px;height:1px;background:#4e4e4e"></div>
<div class="a" style="left:1188.400px;top:171px;width:9px;height:118px;background:#4d4d4d"></div>
<div class="a" style="left:1189.700px;top:183px;width:7px;height:41.600px;background:#6a6a6a"></div>
<svg width="6" height="4" viewBox="0 0 6 4" style="left:1190px;top:175.500px"><path d="M.5 3.500 L3 1 L5.500 3.500" fill="none" stroke="#7a7a7a" stroke-width=".9"/></svg>
<svg width="6" height="4" viewBox="0 0 6 4" style="left:1190px;top:282px"><path d="M.5 .5 L3 3 L5.500 .5" fill="none" stroke="#7a7a7a" stroke-width=".9"/></svg>
<div class="a phead" style="left:976px;top:314px;width:224px;height:22px"></div>
<div class="a ptab" style="left:976px;top:314px;width:37px;height:22px"></div>
<div class="a panel" style="left:976px;top:336px;width:224px;height:294px"></div>
<svg width="7" height="5" viewBox="0 0 7 5" style="left:1189px;top:322px"><path d="M0 .5 H7 M0 2.500 H7 M0 4.500 H7" stroke="#c8c8c8" stroke-width=".9"/></svg>
<div class="a" style="left:979.700px;top:344.900px;width:64.800px;height:13.200px;background:#484848;border:1px solid #404040"></div>
<svg width="9" height="9" viewBox="0 0 9 9" style="left:984.500px;top:347px"><circle cx="3.600" cy="3.600" r="2.700" fill="none" stroke="#dcdcdc" stroke-width="1.100"/><path d="M5.600 5.600 L8.300 8.300" stroke="#dcdcdc" stroke-width="1.300"/></svg>
<svg width="6" height="4" viewBox="0 0 6 4" style="left:1037.500px;top:350.500px"><path d="M.5 .5 L3 3 L5.500 .5" fill="none" stroke="#bdbdbd" stroke-width=".9"/></svg>
<svg width="10" height="8.500" viewBox="0 0 11 9" style="left:1055.500px;top:346.200px"><rect x=".5" y=".5" width="10" height="8" fill="none" stroke="#dcdcdc" stroke-width="1.100"/><path d="M1.500 7.500 l3 -3.500 l2 2 l1.500 -1.500 l2 3z" fill="#dcdcdc"/></svg>
<svg width="10" height="10" viewBox="0 0 12 12" style="left:1074px;top:345.500px"><circle cx="6" cy="6" r="5" fill="none" stroke="#dcdcdc" stroke-width="1.300"/><path d="M2.500 9.500 A5 5 0 0 1 9.500 2.500 Z" fill="#dcdcdc"/></svg>
<svg width="10" height="10" viewBox="0 0 10 10" style="left:1093px;top:345.500px"><text x="5" y="9.200" text-anchor="middle" font-family="Liberation Serif, serif" font-weight="bold" font-size="11.500" fill="#dcdcdc">T</text></svg>
<svg width="11" height="10" viewBox="0 0 11 10" style="left:1111.300px;top:345.500px"><rect x="1.800" y="1.800" width="7.400" height="6.400" fill="none" stroke="#dcdcdc" stroke-width="1.100"/><rect x="0" y="0" width="3" height="3" fill="#dcdcdc"/><rect x="8" y="0" width="3" height="3" fill="#dcdcdc"/><rect x="0" y="7" width="3" height="3" fill="#dcdcdc"/><rect x="8" y="7" width="3" height="3" fill="#dcdcdc"/></svg>
<svg width="10" height="11" viewBox="0 0 10 11" style="left:1131px;top:345px"><path d="M.6 .6 H6 L9.400 4 V10.400 H.6Z" fill="none" stroke="#dcdcdc" stroke-width="1.100"/><rect x="3.500" y="5" width="4.500" height="4" fill="#dcdcdc"/></svg>
<div class="a" style="left:1149.200px;top:343.200px;width:6.600px;height:6.600px;border-radius:50%;background:#e6e6e6"></div>
<div class="a" style="left:1152px;top:351px;width:36px;height:8px;background:#4e4e4e"></div>
<div class="a" style="left:979.700px;top:366.400px;width:98px;height:13.300px;background:#484848;border:1px solid #404040"></div>
<svg width="6" height="4" viewBox="0 0 6 4" style="left:1070.500px;top:372px"><path d="M.5 .5 L3 3 L5.500 .5" fill="none" stroke="#bdbdbd" stroke-width=".9"/></svg>
<div class="a" style="left:1117.600px;top:366.4px;width:23.300px;height:13px;background:#484848;border:1px solid #404040"></div>
<div class="a" style="left:1145.800px;top:366.4px;width:8.400px;height:13px;background:#4c4c4c;border:1px solid #444"></div>
<svg width="6" height="4" viewBox="0 0 6 4" style="left:1147px;top:371.4px"><path d="M.5 .5 L3 3 L5.500 .5" fill="none" stroke="#bdbdbd" stroke-width=".9"/></svg>
<div class="a" style="left:1117.600px;top:388.0px;width:23.300px;height:13px;background:#484848;border:1px solid #404040"></div>
<div class="a" style="left:1145.800px;top:388.0px;width:8.400px;height:13px;background:#4c4c4c;border:1px solid #444"></div>
<svg width="6" height="4" viewBox="0 0 6 4" style="left:1147px;top:393.0px"><path d="M.5 .5 L3 3 L5.500 .5" fill="none" stroke="#bdbdbd" stroke-width=".9"/></svg>
<svg width="10" height="10" viewBox="0 0 10 10" style="left:1005.600px;top:389.500px"><rect x=".5" y=".5" width="9" height="9" fill="none" stroke="#dcdcdc" stroke-width="1"/><rect x="1" y="1" width="2.700" height="2.700" fill="#dcdcdc"/><rect x="6.300" y="1" width="2.700" height="2.700" fill="#dcdcdc"/><rect x="3.700" y="3.700" width="2.600" height="2.600" fill="#dcdcdc"/><rect x="1" y="6.300" width="2.700" height="2.700" fill="#dcdcdc"/><rect x="6.300" y="6.300" width="2.700" height="2.700" fill="#dcdcdc"/></svg>
<svg width="11" height="11" viewBox="0 0 16 16" style="left:1022.500px;top:389px"><path d="M14.500 1.500 q-5 3.500 -8 8.300 l1.800 1.800 q4.800 -4 6.200 -10.100z" fill="#dcdcdc"/><path d="M5.600 10.600 q-2.800 .2 -2.800 2.600 q-.3 1.200 -1.500 1.600 q4.500 1 6 -2.500z" fill="#dcdcdc"/></svg>
<svg width="11" height="11" viewBox="0 0 16 16" style="left:1039px;top:389px"><path d="M8 1 L10.500 4.300 H8.800 V7.200 H11.700 V5.500 L15 8 L11.700 10.500 V8.800 H8.800 V11.700 H10.500 L8 15 L5.500 11.700 H7.200 V8.800 H4.300 V10.500 L1 8 L4.300 5.500 V7.200 H7.200 V4.300 H5.500Z" fill="#dcdcdc"/></svg>
<svg width="11" height="10" viewBox="0 0 11 10" style="left:1056px;top:389.500px"><path d="M2.500 0 V8 H11 M0 2 H8.500 V10" fill="none" stroke="#dcdcdc" stroke-width="1.100"/><path d="M8.500 2 L2.500 8" stroke="#dcdcdc" stroke-width=".8"/></svg>
<svg width="8" height="9.800" viewBox="0 0 9 11" style="left:1075.500px;top:389.300px"><rect x=".3" y="4.500" width="8.400" height="6.300" rx=".8" fill="#dcdcdc"/><path d="M2.200 4.800 V3 q0 -2.300 2.300 -2.300 q2.300 0 2.300 2.300 V4.800" fill="none" stroke="#dcdcdc" stroke-width="1.300"/></svg>
<div class="a" style="left:976.400px;top:406.300px;width:211px;height:127px;background:#515151"></div>
<div class="a" style="left:976.400px;top:406.300px;width:211px;height:31.600px;background:#656565"></div>
<div class="a" style="left:976.400px;top:406.300px;width:22.600px;height:31.600px;background:#646464"></div>
<div class="a" style="left:976.400px;top:438.5px;width:211px;height:1px;background:#494949"></div>
<div class="a" style="left:976.400px;top:470.5px;width:211px;height:1px;background:#494949"></div>
<div class="a" style="left:976.400px;top:502.5px;width:211px;height:1px;background:#494949"></div>
<div class="a" style="left:976.400px;top:532.0px;width:211px;height:1px;background:#494949"></div>
<div class="a" style="left:999px;top:406.300px;width:1px;height:126px;background:#4b4b4b"></div>
<svg width="11" height="8" viewBox="0 0 11 8" style="left:982px;top:418.3px"><path d="M.3 4 Q5.500 -2.400 10.700 4 Q5.500 10.400 .3 4Z" fill="#e2e2e2"/><circle cx="5.500" cy="4" r="2.300" fill="#4a4a4a"/><circle cx="5.500" cy="4" r="1.100" fill="#e2e2e2"/></svg>
<svg width="11" height="8" viewBox="0 0 11 8" style="left:982px;top:450.2px"><path d="M.3 4 Q5.500 -2.400 10.700 4 Q5.500 10.400 .3 4Z" fill="#e2e2e2"/><circle cx="5.500" cy="4" r="2.300" fill="#4a4a4a"/><circle cx="5.500" cy="4" r="1.100" fill="#e2e2e2"/></svg>
<svg width="11" height="8" viewBox="0 0 11 8" style="left:982px;top:482.7px"><path d="M.3 4 Q5.500 -2.400 10.700 4 Q5.500 10.400 .3 4Z" fill="#e2e2e2"/><circle cx="5.500" cy="4" r="2.300" fill="#4a4a4a"/><circle cx="5.500" cy="4" r="1.100" fill="#e2e2e2"/></svg>
<svg width="11" height="8" viewBox="0 0 11 8" style="left:982px;top:515.0px"><path d="M.3 4 Q5.500 -2.400 10.700 4 Q5.500 10.400 .3 4Z" fill="#e2e2e2"/><circle cx="5.500" cy="4" r="2.300" fill="#4a4a4a"/><circle cx="5.500" cy="4" r="1.100" fill="#e2e2e2"/></svg>
<div class="a" style="left:1003px;top:409.600px;width:13.300px;height:24px;background:#f4f2ee;overflow:hidden"><div class="a" style="left:1.500px;top:1px;width:9px;height:13px;background:linear-gradient(160deg,#e2d9a8 0%,#3b6bc0 18%,#d9b98a 38%,#2a2a35 52%,#f0eff2 70%,#8a7e58 100%)"></div><div class="a" style="left:5px;top:15.500px;width:7px;height:5px;background:linear-gradient(90deg,#d5d9e2,#c7433c 55%,#9fb2cc)"></div><div class="a" style="left:1.500px;top:15.500px;width:3px;height:5px;background:#b9b9b9"></div></div>
<svg width="19" height="29" viewBox="0 0 19 29" style="left:1000.200px;top:407.800px"><path d="M.5 4 V.5 H4 M15 .5 H18.500 V4 M18.500 25 V28.500 H15 M4 28.500 H.5 V25" fill="none" stroke="#f2f2f2" stroke-width="1"/></svg>
<div class="t" style="left:1009px;top:446.500px;font-family:'Liberation Serif',serif;font-weight:bold;font-size:15.500px;color:#dcdcdc;filter:blur(.3px)">T</div>
<div class="a" style="left:1003px;top:474.400px;width:13.300px;height:23.300px;background-color:#fff;background-image:linear-gradient(45deg,#ccc 25%,transparent 25%,transparent 75%,#ccc 75%),linear-gradient(45deg,#ccc 25%,transparent 25%,transparent 75%,#ccc 75%);background-size:4px 4px;background-position:0 0,2px 2px"></div>
<div class="a" style="left:1003px;top:506.700px;width:13.300px;height:23.300px;background:#fff"></div>
<svg width="9" height="11" viewBox="0 0 9 11" style="left:1166px;top:513.500px"><rect x=".6" y="4.500" width="7.800" height="6" rx=".6" fill="none" stroke="#dcdcdc" stroke-width="1.100"/><path d="M2.300 4.500 V3 q0 -2.300 2.200 -2.300 q2.200 0 2.200 2.300 V4.500" fill="none" stroke="#dcdcdc" stroke-width="1.100"/><rect x="3.800" y="6.300" width="1.400" height="2.600" fill="#dcdcdc"/></svg>
<div class="a" style="left:976px;top:612.400px;width:224px;height:1px;background:#484848"></div>
<svg width="11" height="6" viewBox="0 0 11 6" style="left:1041.200px;top:618.500px"><rect x=".5" y=".8" width="5.500" height="4.400" rx="2.200" fill="none" stroke="#7a7a7a" stroke-width="1"/><rect x="5" y=".8" width="5.500" height="4.400" rx="2.200" fill="none" stroke="#7a7a7a" stroke-width="1"/></svg>
<div class="t" style="left:1062.800px;top:615px;font-family:'Liberation Serif',serif;font-style:italic;font-size:11px;color:#e0e0e0;filter:blur(.3px)">fx</div>
<svg width="3" height="3" viewBox="0 0 3 3" style="left:1072px;top:625px"><path d="M3 0 V3 H0Z" fill="#cfcfcf"/></svg>
<svg width="10" height="8" viewBox="0 0 10 8" style="left:1083.700px;top:617.500px"><rect x="0" y="0" width="10" height="8" rx=".8" fill="#dcdcdc"/><circle cx="5" cy="4" r="2.400" fill="#4a4a4a"/></svg>
<svg width="10" height="10" viewBox="0 0 12 12" style="left:1104.300px;top:616.300px"><circle cx="6" cy="6" r="5" fill="none" stroke="#dcdcdc" stroke-width="1.300"/><path d="M2.500 9.500 A5 5 0 0 1 9.500 2.500 Z" fill="#dcdcdc"/></svg>
<svg width="3" height="3" viewBox="0 0 3 3" style="left:1113.500px;top:625px"><path d="M3 0 V3 H0Z" fill="#cfcfcf"/></svg>
<svg width="10" height="8" viewBox="0 0 10 8" style="left:1126px;top:617.500px"><path d="M0 .8 q0 -.8 .8 -.8 H3.800 L4.800 1.200 H9.200 q.8 0 .8 .8 V7.200 q0 .8 -.8 .8 H.8 q-.8 0 -.8 -.8z" fill="#dcdcdc"/></svg>
<svg width="10" height="10" viewBox="0 0 10 10" style="left:1147.300px;top:616.300px"><rect x=".6" y=".6" width="8.800" height="8.800" rx=".8" fill="none" stroke="#dcdcdc" stroke-width="1.100"/><path d="M5 2.600 V7.400 M2.600 5 H7.400" stroke="#dcdcdc" stroke-width="1.100"/></svg>
<svg width="9" height="10" viewBox="0 0 9 10" style="left:1168.500px;top:616.300px"><path d="M.3 1.800 H8.700 M3 1.800 V.5 H6 V1.800" fill="none" stroke="#dcdcdc" stroke-width="1"/><path d="M1.200 2.800 H7.800 L7.300 10 H1.700Z" fill="#dcdcdc"/><path d="M3.300 4 V8.800 M4.500 4 V8.800 M5.700 4 V8.800" stroke="#4a4a4a" stroke-width=".6"/></svg>
<div class="a" style="left:1199px;top:4px;width:1px;height:626px;background:#404040"></div>
<div class="t" style="left:982.7px;top:20.3px;font-size:9px;font-weight:bold;color:#f4f4f4;transform:scaleX(0.851);transform-origin:0 50%">Color</div>
<div class="t" style="left:1016.0px;top:20.3px;font-size:9px;font-weight:bold;color:#a8a8a8;transform:scaleX(0.802);transform-origin:0 50%">Swatches</div>
<div class="t" style="left:1063.3px;top:20.3px;font-size:9px;font-weight:bold;color:#a8a8a8;transform:scaleX(0.833);transform-origin:0 50%">Gradients</div>
<div class="t" style="left:1112.7px;top:20.3px;font-size:9px;font-weight:bold;color:#a8a8a8;transform:scaleX(0.833);transform-origin:0 50%">Patterns</div>
<div class="t" style="left:982.7px;top:126.0px;font-size:9px;font-weight:bold;color:#f4f4f4;transform:scaleX(0.853);transform-origin:0 50%">Properties</div>
<div class="t" style="left:1034.3px;top:126.0px;font-size:9px;font-weight:bold;color:#a8a8a8;transform:scaleX(0.838);transform-origin:0 50%">Adjustments</div>
<div class="t" style="left:1094.7px;top:126.0px;font-size:9px;font-weight:bold;color:#a8a8a8;transform:scaleX(0.815);transform-origin:0 50%">Libraries</div>
<div class="t" style="left:1006.3px;top:152.5px;font-size:9px;color:#c4c4c4;transform:scaleX(0.835);transform-origin:0 50%">Pixel Layer</div>
<div class="t" style="left:995.0px;top:177.4px;font-size:9px;font-weight:bold;color:#ececec;transform:scaleX(0.861);transform-origin:0 50%">Transform</div>
<div class="t" style="left:1010.6px;top:195.6px;font-size:8.5px;color:#bdbdbd;transform:scaleX(0.797);transform-origin:0 50%">W</div>
<div class="t" style="left:1024.6px;top:195.3px;font-size:9px;color:#e2e2e2;transform:scaleX(0.902);transform-origin:0 50%">3870 px</div>
<div class="t" style="left:1076.5px;top:195.6px;font-size:8.5px;color:#bdbdbd;transform:scaleX(0.970);transform-origin:0 50%">X</div>
<div class="t" style="left:1089.4px;top:195.3px;font-size:9px;color:#e2e2e2;transform:scaleX(0.920);transform-origin:0 50%">-1136 px</div>
<div class="t" style="left:1011.5px;top:214.8px;font-size:8.5px;color:#bdbdbd;transform:scaleX(0.896);transform-origin:0 50%">H</div>
<div class="t" style="left:1024.6px;top:214.6px;font-size:9px;color:#e2e2e2;transform:scaleX(0.902);transform-origin:0 50%">5031 px</div>
<div class="t" style="left:1076.5px;top:214.8px;font-size:8.5px;color:#bdbdbd;transform:scaleX(0.970);transform-origin:0 50%">Y</div>
<div class="t" style="left:1089.4px;top:214.6px;font-size:9px;color:#e2e2e2;transform:scaleX(0.906);transform-origin:0 50%">-155 px</div>
<div class="t" style="left:1025.2px;top:237.5px;font-size:9px;color:#d4d4d4;transform:scaleX(0.885);transform-origin:0 50%">0.00°</div>
<div class="t" style="left:994.7px;top:268.8px;font-size:9px;font-weight:bold;color:#ececec;transform:scaleX(0.902);transform-origin:0 50%">Align and Distribute</div>
<div class="t" style="left:983.0px;top:285.4px;font-size:9px;color:#a6a6a6;transform:scaleX(0.844);transform-origin:0 50%">Align:</div>
<div class="t" style="left:983.0px;top:320.3px;font-size:9px;font-weight:bold;color:#f4f4f4;transform:scaleX(0.803);transform-origin:0 50%">Layers</div>
<div class="t" style="left:1019.6px;top:320.3px;font-size:9px;font-weight:bold;color:#a8a8a8;transform:scaleX(0.819);transform-origin:0 50%">Channels</div>
<div class="t" style="left:1066.1px;top:320.3px;font-size:9px;font-weight:bold;color:#a8a8a8;transform:scaleX(0.840);transform-origin:0 50%">Paths</div>
<div class="t" style="left:995.7px;top:347.5px;font-size:9px;color:#dcdcdc;transform:scaleX(0.810);transform-origin:0 50%">Kind</div>
<div class="t" style="left:984.7px;top:369.4px;font-size:9px;color:#dcdcdc;transform:scaleX(0.858);transform-origin:0 50%">Normal</div>
<div class="t" style="left:1084.4px;top:369.4px;font-size:9px;color:#c4c4c4;transform:scaleX(0.854);transform-origin:0 50%">Opacity:</div>
<div class="t" style="left:1119.3px;top:368.5px;font-size:9px;color:#e6e6e6;transform:scaleX(0.894);transform-origin:0 50%">100%</div>
<div class="t" style="left:980.4px;top:390.4px;font-size:9px;color:#bdbdbd;transform:scaleX(0.864);transform-origin:0 50%">Lock:</div>
<div class="t" style="left:1101.0px;top:390.4px;font-size:9px;color:#c4c4c4;transform:scaleX(0.829);transform-origin:0 50%">Fill:</div>
<div class="t" style="left:1119.3px;top:390.0px;font-size:9px;color:#e6e6e6;transform:scaleX(0.894);transform-origin:0 50%">100%</div>
<div class="t" style="left:1024.6px;top:418.3px;font-size:9px;color:#f0f0f0;transform:scaleX(0.829);transform-origin:0 50%">Layer 2</div>
<div class="t" style="left:1034.6px;top:450.2px;font-size:9px;color:#dcdcdc;transform:scaleX(0.793);transform-origin:0 50%">NUHCS IN THE NEWS</div>
<div class="t" style="left:1024.6px;top:482.7px;font-size:9px;color:#dcdcdc;transform:scaleX(0.806);transform-origin:0 50%">Layer 1</div>
<div class="t" style="left:1024.6px;top:515.0px;font-size:9px;font-style:italic;color:#dcdcdc;transform:scaleX(0.864);transform-origin:0 50%">Background</div>
<!--RIGHT_END-->

<!-- STATUS -->
<!--STATUS_BEGIN-->
<div class="a" style="left:33px;top:617.500px;width:36px;height:13px;background:#434343"></div>
<div class="t" id="zoompct" style="left:36.700px;top:620.300px;font-size:10.500px;color:#e0e0e0;transform:scaleX(.865);transform-origin:0 50%">15.42%</div>
<div class="t" id="docsize" style="left:91.700px;top:621.300px;font-size:8px;color:#c6c6c6;transform:scaleX(.904);transform-origin:0 50%">2160 px x 3840 px (300 ppi)</div>
<svg width="4" height="7" viewBox="0 0 4 7" style="left:205px;top:621.500px"><path d="M.5 .5 L3.300 3.500 L.5 6.500" fill="none" stroke="#9a9a9a" stroke-width="1"/></svg>
<svg width="4" height="6" viewBox="0 0 4 6" style="left:220px;top:622px"><path d="M3.300 .5 L.7 3 L3.300 5.500" fill="none" stroke="#777" stroke-width=".9"/></svg>
<svg width="4" height="6" viewBox="0 0 4 6" style="left:920px;top:622px"><path d="M.7 .5 L3.300 3 L.7 5.500" fill="none" stroke="#777" stroke-width=".9"/></svg>
<svg width="6" height="4" viewBox="0 0 6 4" style="left:933.500px;top:33px"><path d="M.5 3.500 L3 1 L5.500 3.500" fill="none" stroke="#626262" stroke-width=".9"/></svg>
<svg width="6" height="4" viewBox="0 0 6 4" style="left:933.500px;top:608px"><path d="M.5 .5 L3 3 L5.500 .5" fill="none" stroke="#626262" stroke-width=".9"/></svg>
<div class="a" style="left:1078px;top:0;width:30px;height:1px;background:#2f7fe8"></div>
<!--STATUS_END-->

<div class="a" id="bottomline"></div>
</body>
</html>
